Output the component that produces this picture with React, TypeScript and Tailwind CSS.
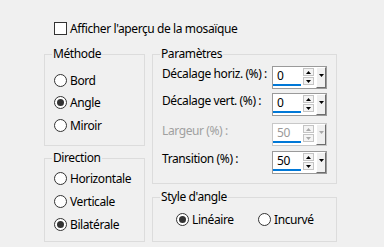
import React from "react";

function Radio({ label, checked }: { label: string; checked?: boolean }) {
  return (
    <div className="flex items-center h-[13px]">
      <span className="w-[13px] h-[13px] shrink-0 rounded-full border border-[#333333] bg-white flex items-center justify-center">
        {checked && <span className="w-[7px] h-[7px] rounded-full bg-[#333333]" />}
      </span>
      <span className="ml-[3px] text-[12px] leading-[15px] whitespace-nowrap">{label}</span>
    </div>
  );
}

function Group({
  title,
  className,
  children,
}: {
  title: string;
  className: string;
  children?: React.ReactNode;
}) {
  return (
    <div className={"relative border border-[#dcdcdc] " + className}>
      <span className="absolute left-[7px] top-[-9px] px-[1px] bg-[#f0f0f0] text-[12px] leading-[15px] whitespace-nowrap">
        {title}
      </span>
      {children}
    </div>
  );
}

function Tri({ up, color }: { up?: boolean; color: string }) {
  return (
    <svg width="5" height="3" viewBox="0 0 5 3" className="block">
      {up ? (
        <polygon points="2.5,0 5,3 0,3" fill={color} />
      ) : (
        <polygon points="0,0 5,0 2.5,3" fill={color} />
      )}
    </svg>
  );
}

function Spin({ value, disabled }: { value: string; disabled?: boolean }) {
  const arrow = disabled ? "#a8a8a8" : "#000000";
  return (
    <div
      className={
        "flex w-[55px] h-[23px] border bg-white " +
        (disabled ? "border-[#c8c8c8]" : "border-[#9a9a9a]")
      }
    >
      <div className="w-[30px] flex flex-col">
        <div
          className={
            "pl-[4px] pt-[1px] text-[12px] leading-[15px] " +
            (disabled ? "text-[#9a9a9a]" : "text-black")
          }
        >
          {value}
        </div>
        <div className="mt-[1px] w-[28px] h-[2px] bg-[#0078d7]" />
      </div>
      <div className="w-[11px] flex flex-col pt-[1px] gap-[1px]">
        <div className="h-[8px] border border-[#c4c4c4] bg-[#f4f4f4] flex items-center justify-center">
          <Tri up color={arrow} />
        </div>
        <div className="h-[8px] border border-[#c4c4c4] bg-[#f4f4f4] flex items-center justify-center">
          <Tri color={arrow} />
        </div>
      </div>
      <div className="ml-[2px] w-[10px] h-[21px] border-t border-l border-t-[#ffffff] border-l-[#ffffff] border-r border-b border-r-[#6d6d6d] border-b-[#6d6d6d] bg-[#f0f0f0] flex justify-center pt-[6px]">
        <Tri color={arrow} />
      </div>
    </div>
  );
}

function Row({
  label,
  value,
  disabled,
  className,
}: {
  label: string;
  value: string;
  disabled?: boolean;
  className?: string;
}) {
  return (
    <div className={"flex items-start " + (className || "")}>
      <div
        className={
          "w-[110px] text-[12px] leading-[15px] whitespace-nowrap " +
          (disabled ? "text-[#a0a0a0]" : "text-black")
        }
      >
        {label}
      </div>
      <Spin value={value} disabled={disabled} />
    </div>
  );
}

export default function App() {
  return (
    <div className="w-[384px] h-[247px] bg-[#f0f0f0] text-black font-['Noto_Sans',sans-serif] tracking-[-0.4px] overflow-hidden">
      <div className="pt-[21px] pl-[54px] flex items-center">
        <span className="w-[13px] h-[13px] border border-[#333333] bg-white" />
        <span className="ml-[3px] text-[12px] leading-[15px] whitespace-nowrap">
          Afficher l'aperçu de la mosaïque
        </span>
      </div>
      <div className="mt-[18px] pl-[44px] flex">
        <div className="w-[101px] flex flex-col">
          <Group title="Méthode" className="h-[92px] pl-[9px] pt-[19px]">
            <Radio label="Bord" />
            <div className="mt-[9px]">
              <Radio label="Angle" checked />
            </div>
            <div className="mt-[10px]">
              <Radio label="Miroir" />
            </div>
          </Group>
          <Group title="Direction" className="mt-[12px] h-[84px] pl-[9px] pt-[13px]">
            <Radio label="Horizontale" />
            <div className="mt-[10px]">
              <Radio label="Verticale" />
            </div>
            <div className="mt-[10px]">
              <Radio label="Bilatérale" checked />
            </div>
          </Group>
        </div>
        <div className="ml-[7px] w-[185px] flex flex-col">
          <Group title="Paramètres" className="h-[130px] pl-[9px] pt-[11px]">
            <Row label="Décalage horiz. (%) :" value="0" />
            <Row label="Décalage vert. (%) :" value="0" className="mt-[4px]" />
            <Row label="Largeur (%) :" value="50" disabled className="mt-[7px]" />
            <Row label="Transition (%) :" value="50" className="mt-[5px]" />
          </Group>
          <Group title="Style d'angle" className="mt-[13px] h-[45px] pl-[23px] pt-[15px]">
            <div className="flex">
              <div className="w-[82px]">
                <Radio label="Linéaire" checked />
              </div>
              <Radio label="Incurvé" />
            </div>
          </Group>
        </div>
      </div>
    </div>
  );
}
